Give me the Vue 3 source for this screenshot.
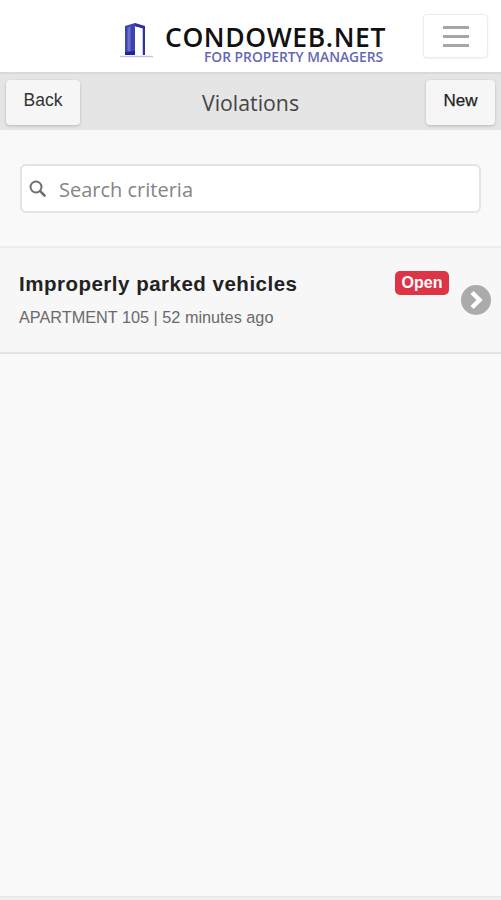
<script setup>
const item = { title: 'Improperly parked vehicles', meta: 'APARTMENT 105 | 52 minutes ago', status: 'Open' }
</script>

<template>
  <div class="page">
    <header class="header">
      <div class="logo">
        <svg class="logo-mark" width="36" height="38" viewBox="0 0 36 38">
          <path d="M1 35.500h33" stroke="#c3c5e8" stroke-width="1.500" />
          <path d="M6 5l10-3v32H6z" fill="#3d44b0" />
          <path d="M8.500 6.500l3-1v27h-3z" fill="#6a70c8" />
          <path d="M16 2l10 3v29h-2.500V7.500L16 5.500z" fill="#2c319e" />
          <path d="M16 5.500l7.500 2V34H16z" fill="#fff" />
          <path d="M6 31l10-1v4H6z" fill="#20258c" />
        </svg>
        <div class="logo-text">
          <div class="brand">CONDOWEB.NET</div>
          <div class="tagline">FOR PROPERTY MANAGERS</div>
        </div>
      </div>
      <button class="menu" aria-label="Menu">
        <span></span><span></span><span></span>
      </button>
    </header>

    <nav class="toolbar">
      <button class="tool-btn back">Back</button>
      <h1 class="title">Violations</h1>
      <button class="tool-btn new">New</button>
    </nav>

    <div class="search-wrap">
      <label class="search">
        <svg class="search-icon" width="20" height="20" viewBox="0 0 20 20">
          <circle cx="8" cy="8" r="5.500" fill="none" stroke="#707070" stroke-width="2" />
          <path d="M12.200 12.200L16.500 16.500" stroke="#707070" stroke-width="2.600" stroke-linecap="round" />
        </svg>
        <input class="input" type="text" placeholder="Search criteria" />
      </label>
    </div>

    <div class="list">
      <div class="row">
        <div class="row-text">
          <div class="row-title">{{ item.title }}</div>
          <div class="row-meta">{{ item.meta }}</div>
        </div>
        <span class="badge">{{ item.status }}</span>
        <svg class="chevron" width="30" height="30" viewBox="0 0 30 30">
          <circle cx="15" cy="15" r="15" fill="#ababab" />
          <path d="M11 7.500L18.500 15 11 22.500" fill="none" stroke="#fff" stroke-width="4.500" />
        </svg>
      </div>
    </div>

    <div class="spacer"></div>
    <div class="foot"></div>
  </div>
</template>

<style>
html, body { margin: 0; background: #f9f9f9; }
</style>

<style scoped>
.page {
  width: 501px;
  height: 900px;
  display: flex;
  flex-direction: column;
  background: #f9f9f9;
  font-family: "Liberation Sans", Arial, sans-serif;
  overflow: hidden;
}
.header {
  height: 72px;
  box-sizing: border-box;
  flex: none;
  background: #fff;
  display: flex;
  align-items: flex-start;
  padding: 14px 13px 0 119px;
  justify-content: space-between;
}
.logo { display: flex; align-items: flex-start; }
.logo-mark { flex: none; margin: 7px 10px 0 0; }
.logo-text { width: 224px; }
.brand {
  font-family: "Open Sans", sans-serif;
  font-weight: 600;
  font-size: 26.500px;
  letter-spacing: 0.6px;
  line-height: 26px;
  margin-top: 10px;
  color: #111;
  white-space: nowrap;
}
.tagline {
  font-family: "Open Sans", sans-serif;
  font-weight: 600;
  font-size: 13.800px;
  line-height: 14px;
  padding-left: 39px;
  color: #6368b3;
  white-space: nowrap;
}
.menu {
  width: 65px;
  height: 44px;
  box-sizing: border-box;
  background: #fff;
  border: 1px solid #ececec;
  border-radius: 4px;
  box-shadow: 0 1px 2px rgba(0,0,0,0.05);
  display: flex;
  flex-direction: column;
  justify-content: center;
  align-items: center;
  gap: 6px;
  padding: 0;
}
.menu span { display: block; width: 26px; height: 3px; background: #a6a6a6; }
.toolbar {
  height: 58px;
  flex: none;
  box-sizing: border-box;
  background: #e5e5e5;
  border-top: 2px solid #d9d9d9;
  display: grid;
  grid-template-columns: 1fr auto 1fr;
  align-items: start;
  padding: 6px 6px 0;
}
.tool-btn {
  height: 45px;
  box-sizing: border-box;
  background: #f6f6f6;
  border: none;
  border-radius: 4px;
  box-shadow: 0 1px 3px rgba(0,0,0,0.2);
  font-family: "Liberation Sans", Arial, sans-serif;
  font-size: 17px;
  color: #222;
  padding: 0 0 5px;
}
.back { width: 74px; font-size: 17.500px; padding-bottom: 4px; color: #333; }
.new { width: 69px; justify-self: end; -webkit-text-stroke: 0.25px #222; padding-bottom: 3px; }
.title {
  margin: 0;
  font-family: "Open Sans", sans-serif;
  font-weight: 400;
  font-size: 21.300px;
  line-height: 46px;
  color: #444;
}
.search-wrap { padding: 34px 20px 33px; flex: none; }
.search {
  height: 49px;
  box-sizing: border-box;
  background: #fff;
  border: 2px solid #e4e4e4;
  border-radius: 6px;
  display: flex;
  align-items: center;
  padding-left: 6px;
  gap: 11px;
}
.search-icon { flex: none; }
.input {
  flex: 1;
  min-width: 0;
  border: none;
  outline: none;
  background: transparent;
  font-family: "Open Sans", sans-serif;
  font-size: 20px;
  line-height: 28px;
  height: 30px;
  color: #333;
  padding: 1px 0 0;
  box-sizing: border-box;
}
.input::placeholder { color: #858585; opacity: 1; }
.list { flex: none; }
.row {
  height: 108px;
  box-sizing: border-box;
  border-top: 2px solid #ececec;
  border-bottom: 2px solid #e4e4e4;
  background: #f7f7f7;
  display: flex;
  align-items: flex-start;
  padding: 0 10px 0 19px;
}
.row-text { flex: 1; min-width: 0; padding-top: 23px; }
.row-title {
  font-size: 20.500px;
  font-weight: 700;
  line-height: 26px;
  letter-spacing: 0.5px;
  color: #222;
  white-space: nowrap;
}
.row-meta {
  font-size: 16.250px;
  line-height: 20px;
  margin-top: 10px;
  color: #6a6a6a;
  white-space: nowrap;
}
.badge {
  flex: none;
  margin: 23px 12px 0 0;
  height: 24px;
  width: 54px;
  text-align: center;
  background: #dc3545;
  color: #fff;
  font-weight: 700;
  font-size: 16px;
  line-height: 24px;
  border-radius: 5px;
}
.chevron { flex: none; margin-top: 37px; }
.spacer { flex: 1; }
.foot { height: 4px; flex: none; background: #efefef; border-top: 1px solid #e6e6e6; box-sizing: border-box; }
</style>
